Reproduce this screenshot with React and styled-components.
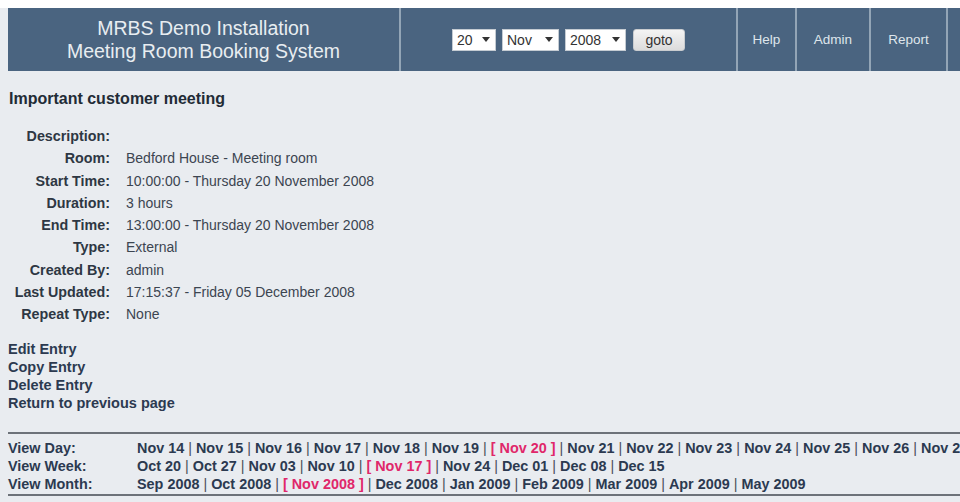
import React from "react";
import styled, { createGlobalStyle } from "styled-components";

const Global = createGlobalStyle`
  html, body { margin: 0; padding: 0; }
  body {
    background: #e9ecf0;
    border-top: 8px solid #ffffff;
    font-family: "Liberation Sans", Arial, sans-serif;
    color: #2b3440;
    overflow: hidden;
  }
`;

const Page = styled.div`
  padding-left: 8px;
  width: 1100px;
`;

const Banner = styled.div`
  display: flex;
  height: 63px;
  background: #4a6480;
  color: #e4eaef;
`;

const Cell = styled.div`
  display: flex;
  align-items: center;
  justify-content: center;
  width: ${(p) => p.$w}px;
  flex: none;
  border-left: ${(p) => (p.$first ? "none" : "2px solid #93a5b6")};
  box-sizing: border-box;
`;

const Title = styled.div`
  text-align: center;
  font-size: 19.5px;
  line-height: 23px;
  color: #e8edf1;
`;

const NavLink = styled.span`
  font-size: 13.5px;
  color: #dfe6ec;
`;

const DateForm = styled.div`
  display: flex;
  align-items: center;
  gap: 6px;
`;

const SelectBox = styled.div`
  display: flex;
  align-items: center;
  justify-content: space-between;
  height: 22px;
  width: ${(p) => p.$w}px;
  box-sizing: border-box;
  padding: 0 5px 0 4px;
  background: #fff;
  border: 1px solid #c5ccd3;
  font-size: 14px;
  color: #333;
`;

const Goto = styled.div`
  display: flex;
  align-items: center;
  justify-content: center;
  width: 52px;
  height: 22px;
  box-sizing: border-box;
  border-radius: 3px;
  border: 1px solid #c9cccf;
  background: linear-gradient(#f4f4f4, #dcdcdc);
  font-size: 14px;
  color: #333;
  margin-left: 1px;
`;

const Content = styled.div`
  padding-top: 18px;
`;

const Heading = styled.h3`
  margin: 0 0 16px 1px;
  font-size: 16px;
  line-height: 20px;
  font-weight: bold;
  color: #222b36;
`;

const Details = styled.div`
  display: grid;
  grid-template-columns: 102px auto;
  column-gap: 16px;
  row-gap: 0;
  font-size: 14px;
  line-height: 22.3px;
`;

const Label = styled.div`
  text-align: right;
  font-weight: bold;
  font-size: 14.3px;
  color: #2e3743;
`;

const Value = styled.div`
  color: #3c4550;
`;

const Actions = styled.div`
  display: flex;
  flex-direction: column;
  margin-top: 14px;
  font-size: 14.5px;
  line-height: 18px;
  font-weight: bold;
`;

const ActionLink = styled.span`
  color: #2c3a50;
`;

const Rule = styled.div`
  height: 2px;
  background: #6d7279;
  margin-top: ${(p) => p.$mt}px;
  width: 960px;
`;

const Views = styled.div`
  display: grid;
  grid-template-columns: 129px auto;
  font-size: 14.4px;
  line-height: 18px;
  font-weight: bold;
  padding: 5px 0 1px;
  white-space: nowrap;
`;

const ViewLabel = styled.div`
  color: #2c3a50;
`;

const ViewLine = styled.div`
  color: #2c3a50;
`;

const Sep = styled.span`
  font-weight: normal;
  color: #49505a;
`;

const Current = styled.span`
  color: #e0276a;
`;

const Caret = () => (
  <svg width="8" height="5" viewBox="0 0 8 5">
    <path d="M0 0h8L4 5z" fill="#333" />
  </svg>
);

const days = ["Nov 14", "Nov 15", "Nov 16", "Nov 17", "Nov 18", "Nov 19", "*Nov 20", "Nov 21", "Nov 22", "Nov 23", "Nov 24", "Nov 25", "Nov 26", "Nov 27"];
const weeks = ["Oct 20", "Oct 27", "Nov 03", "Nov 10", "*Nov 17", "Nov 24", "Dec 01", "Dec 08", "Dec 15"];
const months = ["Sep 2008", "Oct 2008", "*Nov 2008", "Dec 2008", "Jan 2009", "Feb 2009", "Mar 2009", "Apr 2009", "May 2009"];

const LinkRow = ({ items }) => (
  <ViewLine>
    {items.map((it, i) => (
      <React.Fragment key={it}>
        {i > 0 && <Sep> | </Sep>}
        {it.startsWith("*") ? <Current>[ {it.slice(1)} ]</Current> : it}
      </React.Fragment>
    ))}
  </ViewLine>
);

const details = [
  ["Description:", ""],
  ["Room:", "Bedford House - Meeting room"],
  ["Start Time:", "10:00:00 - Thursday 20 November 2008"],
  ["Duration:", "3 hours"],
  ["End Time:", "13:00:00 - Thursday 20 November 2008"],
  ["Type:", "External"],
  ["Created By:", "admin"],
  ["Last Updated:", "17:15:37 - Friday 05 December 2008"],
  ["Repeat Type:", "None"],
];

export default function App() {
  return (
    <Page>
      <Global />
      <Banner>
        <Cell $w={391} $first>
          <Title>
            MRBS Demo Installation
            <br />
            Meeting Room Booking System
          </Title>
        </Cell>
        <Cell $w={337}>
          <DateForm>
            <SelectBox $w={44}>20 <Caret /></SelectBox>
            <SelectBox $w={57}>Nov <Caret /></SelectBox>
            <SelectBox $w={61}>2008 <Caret /></SelectBox>
            <Goto>goto</Goto>
          </DateForm>
        </Cell>
        <Cell $w={59}><NavLink>Help</NavLink></Cell>
        <Cell $w={74}><NavLink>Admin</NavLink></Cell>
        <Cell $w={77}><NavLink>Report</NavLink></Cell>
        <Cell $w={120} />
      </Banner>
      <Content>
        <Heading>Important customer meeting</Heading>
        <Details>
          {details.map(([l, v]) => (
            <React.Fragment key={l}>
              <Label>{l}</Label>
              <Value>{v}</Value>
            </React.Fragment>
          ))}
        </Details>
        <Actions>
          <ActionLink>Edit Entry</ActionLink>
          <ActionLink>Copy Entry</ActionLink>
          <ActionLink>Delete Entry</ActionLink>
          <ActionLink>Return to previous page</ActionLink>
        </Actions>
        <Rule $mt={20} />
        <Views>
          <ViewLabel>View Day:</ViewLabel>
          <LinkRow items={days} />
          <ViewLabel>View Week:</ViewLabel>
          <LinkRow items={weeks} />
          <ViewLabel>View Month:</ViewLabel>
          <LinkRow items={months} />
        </Views>
        <Rule $mt={0} />
      </Content>
    </Page>
  );
}
